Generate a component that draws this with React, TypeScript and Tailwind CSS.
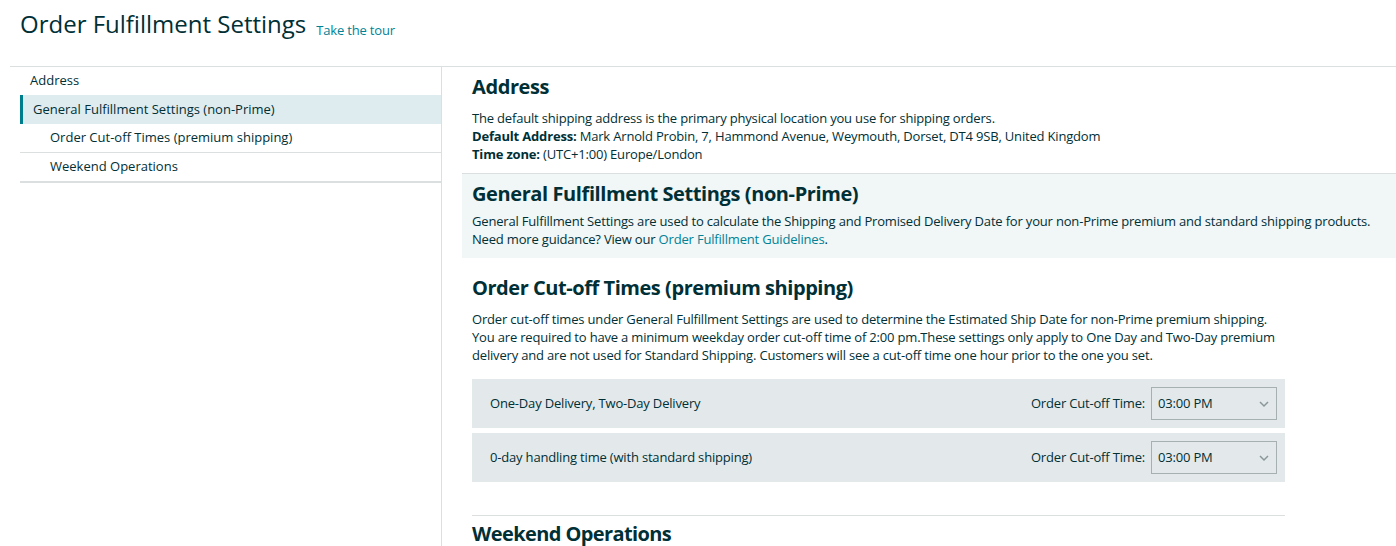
import React from "react";

const font = { fontFamily: '"Open Sans", "Noto Sans", sans-serif' };

function Chevron() {
  return (
    <svg width="12" height="8" viewBox="0 0 12 8" className="shrink-0">
      <path d="M2 2 L6 6 L10 2" fill="none" stroke="#8a9699" strokeWidth="1.5" />
    </svg>
  );
}

function CutoffRow({ label }: { label: string }) {
  return (
    <div className="flex h-[49px] items-center justify-between bg-[#e3e9ea] pl-[18px] pr-[8px]">
      <span className="text-[13px] text-[#002f36]">{label}</span>
      <div className="flex items-center gap-[6px]">
        <span className="text-[13px] text-[#002f36]">Order Cut-off Time:</span>
        <div className="flex h-[33px] w-[126px] items-center justify-between border border-[#a6b0b2] bg-[#e3e9ea] pl-[6px] pr-[6px]">
          <span className="text-[13px] text-[#002f36]">03:00 PM</span>
          <Chevron />
        </div>
      </div>
    </div>
  );
}

export default function App() {
  return (
    <div style={font} className="h-[546px] w-[1396px] overflow-hidden bg-white tracking-[-0.18px] text-[#002f36]">
      <div className="flex h-[66px] items-start pl-[20px] pt-[8px]">
        <h1 className="text-[24px] leading-[32px] tracking-[0px] text-[#002f36]">Order Fulfillment Settings</h1>
        <a className="ml-[10px] mt-[13px] text-[13px] leading-[18px] text-[#008296]">Take the tour</a>
      </div>
      <div className="ml-[10px] flex border-t border-[#dcdfe0]">
        <div className="h-[480px] w-[432px] shrink-0 border-r border-[#dcdfe0] pl-[10px] tracking-[0px]">
          <div className="flex h-[28px] items-center pl-[10px] text-[13px] font-medium">Address</div>
          <div className="flex h-[29px] items-center border-l-[3px] border-[#007d8c] bg-[#dfecef] pl-[10px] text-[13px] font-medium">
            General Fulfillment Settings (non-Prime)
          </div>
          <div className="flex h-[29px] items-center border-b border-[#dcdfe0] pl-[30px] text-[13px] font-medium">
            Order Cut-off Times (premium shipping)
          </div>
          <div className="flex h-[30px] items-center border-b-2 border-[#dcdfe0] pl-[30px] text-[13px] font-medium">
            Weekend Operations
          </div>
        </div>
        <div className="flex-1 pl-[20px]">
          <div className="border-b border-[#dcdfe0] pb-[10px] pl-[10px] pt-[6px]">
            <h2 className="text-[20px] font-bold leading-[28px] tracking-[-0.4px]">Address</h2>
            <div className="mt-[8px] text-[13px] leading-[18px]">
              <p>The default shipping address is the primary physical location you use for shipping orders.</p>
              <p>
                <b>Default Address:</b> Mark Arnold Probin, 7, Hammond Avenue, Weymouth, Dorset, DT4 9SB, United Kingdom
              </p>
              <p>
                <b>Time zone:</b> (UTC+1:00) Europe/London
              </p>
            </div>
          </div>
          <div className="bg-[#f1f6f7] pb-[10px] pl-[10px] pt-[6px]">
            <h2 className="text-[20px] font-bold leading-[28px] tracking-[-0.4px]">General Fulfillment Settings (non-Prime)</h2>
            <div className="mt-[4px] text-[13px] leading-[18px]">
              <p className="whitespace-nowrap">
                General Fulfillment Settings are used to calculate the Shipping and Promised Delivery Date for your non-Prime premium and standard shipping products.
              </p>
              <p>
                Need more guidance? View our <a className="text-[#008296]">Order Fulfillment Guidelines</a>.
              </p>
            </div>
          </div>
          <div className="w-[823px] pl-[10px] pt-[16px]">
            <h2 className="text-[20px] font-bold leading-[28px] tracking-[-0.45px]">Order Cut-off Times (premium shipping)</h2>
            <div className="mt-[8px] text-[13px] leading-[18px]">
              <p>Order cut-off times under General Fulfillment Settings are used to determine the Estimated Ship Date for non-Prime premium shipping.</p>
              <p>You are required to have a minimum weekday order cut-off time of 2:00 pm.These settings only apply to One Day and Two-Day premium</p>
              <p>delivery and are not used for Standard Shipping. Customers will see a cut-off time one hour prior to the one you set.</p>
            </div>
            <div className="mt-[15px] flex flex-col gap-[5px]">
              <CutoffRow label="One-Day Delivery, Two-Day Delivery" />
              <CutoffRow label="0-day handling time (with standard shipping)" />
            </div>
            <div className="mt-[33px] border-t border-[#dcdfe0] pt-[4px]">
              <h2 className="text-[20px] font-bold leading-[28px] tracking-[-0.6px]">Weekend Operations</h2>
            </div>
          </div>
        </div>
      </div>
    </div>
  );
}
